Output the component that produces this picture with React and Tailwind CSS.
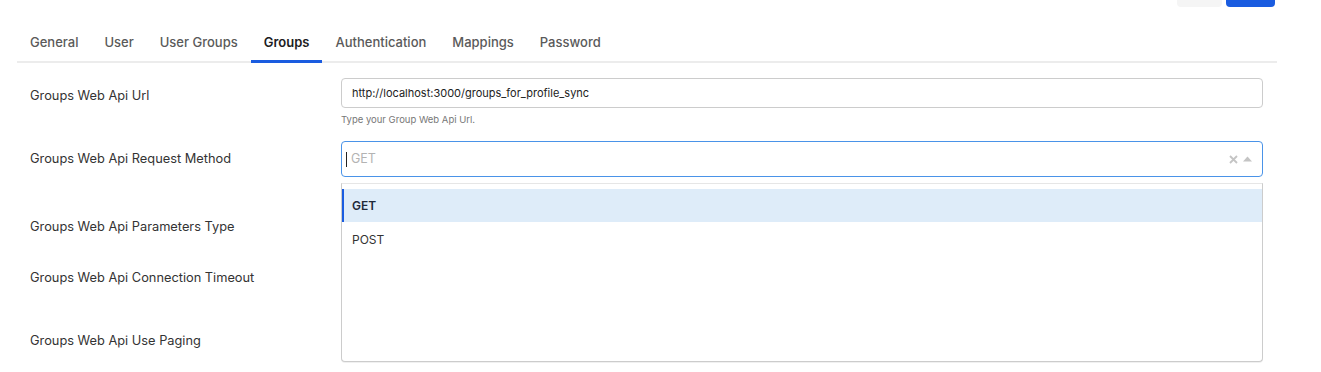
import React, { useState } from 'react';

const tabs = ['General', 'User', 'User Groups', 'Groups', 'Authentication', 'Mappings', 'Password'];

const methodOptions = [
  { id: 'GET', label: 'GET' },
  { id: 'POST', label: 'POST' }
];

const FormRow = ({ label, className = '', labelClass = '', children }) => (
  <div className={`flex items-center ${className}`}>
    <div className={`w-[324px] shrink-0 pl-[13px] text-[12.8px] text-[#333] ${labelClass}`}>{label}</div>
    <div className="w-[922px]">{children}</div>
  </div>
);

const App = () => {
  const [activeTab, setActiveTab] = useState('Groups');
  const [hovered, setHovered] = useState('GET');

  return (
    <div className="h-[372px] w-[1321px] overflow-hidden bg-white font-['Inter',sans-serif] text-[#333]">
      {/* Header buttons (scrolled off the top) */}
      <div className="flex justify-end gap-[4px] pr-[46px]">
        <div className="h-[7px] w-[45px] rounded-b-[4px] bg-[#f5f5f5]" />
        <div className="h-[7px] w-[49px] rounded-b-[4px] bg-[#1a5ce0]" />
      </div>

      <div className="ml-[17px] w-[1260px]">
        {/* Tabs */}
        <div className="mt-[16px] flex border-b-2 border-[#ececec]">
          {tabs.map((tab) => (
            <button
              key={tab}
              type="button"
              onClick={() => setActiveTab(tab)}
              className={`-mb-[2px] border-b-[3px] px-[13px] pt-[9px] pb-[8px] text-[13px] leading-[20px] ${
                activeTab === tab
                  ? 'border-[#1a5ce0] font-semibold text-[#1d1d1f]'
                  : 'border-transparent font-medium text-[#5a5a5a]'
              }`}
            >
              {tab}
            </button>
          ))}
        </div>

        <div className="relative">
          {/* Groups Web Api Url */}
          <FormRow label="Groups Web Api Url" labelClass="pt-[5px]" className="mt-[15px] h-[30px]">
            <div className="flex h-[30px] items-center rounded-[4px] border border-[#ccc] px-[10px] text-[11px] text-[#222]">
              http://localhost:3000/groups_for_profile_sync
            </div>
          </FormRow>
          <div className="mt-[6px] pl-[324px] text-[9.5px] leading-[12px] text-[#777]">
            Type your Group Web Api Url.
          </div>

          {/* Request Method select */}
          <FormRow label="Groups Web Api Request Method" labelClass="-mt-[1px]" className="mt-[15px] h-[36px]">
            <div className="flex h-[36px] items-center rounded-[4px] border border-[#4a93e8] pl-[4px] pr-[10px]">
              <span className="h-[15px] w-px bg-[#222]" />
              <span className="ml-[4px] flex-1 text-[12.5px] text-[#b3b3b3]">GET</span>
              <svg width="9" height="9" viewBox="0 0 9 9">
                <path d="M1 1 L8 8 M8 1 L1 8" stroke="#c4c4c4" strokeWidth="1.8" />
              </svg>
              <svg width="9" height="6" viewBox="0 0 9 6" className="ml-[5px]">
                <path d="M0 5.5 L4.5 0.5 L9 5.5 Z" fill="#c4c4c4" />
              </svg>
            </div>
          </FormRow>

          <FormRow label="Groups Web Api Parameters Type" className="mt-[32px] h-[36px]" />
          <FormRow label="Groups Web Api Connection Timeout" className="mt-[15px] h-[36px]" />
          <FormRow label="Groups Web Api Use Paging" className="mt-[27px] h-[36px]" />

          {/* Open dropdown menu */}
          <div className="absolute left-[324px] top-[105px] h-[179px] w-[922px] rounded-b-[4px] border border-[#ccc] border-t-[#e6e6e6] bg-white pt-[5px] shadow-[0_1px_0_rgba(0,0,0,0.06)]">
            {methodOptions.map((opt) => (
              <div
                key={opt.id}
                onMouseEnter={() => setHovered(opt.id)}
                className={`flex h-[33px] items-center border-l-2 pl-[8px] text-[12px] ${
                  hovered === opt.id
                    ? 'border-[#1a5ce0] bg-[#deecf9] font-semibold text-[#1f2a3a]'
                    : 'border-transparent text-[#333]'
                } ${opt.id === 'POST' ? 'mt-px' : ''}`}
              >
                {opt.label}
              </div>
            ))}
          </div>
        </div>
      </div>
    </div>
  );
};

export default App;
